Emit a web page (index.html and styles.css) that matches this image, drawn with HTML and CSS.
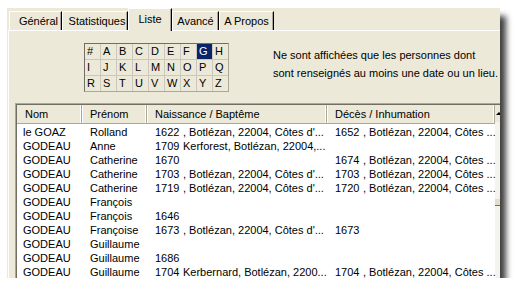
FILE: index.html
```html
<!DOCTYPE html>
<html lang="fr">
  <head>
    <meta charset="UTF-8">
    <title>Liste</title>
    <link rel="stylesheet" href="styles.css">
  </head>
<body>
  <div class="window">
    <div class="tabs">
      <span class="tab t1">Général</span>
      <span class="tab t2">Statistiques</span>
      <span class="tab t3 active">Liste</span>
      <span class="tab t4">Avancé</span>
      <span class="tab t5">A Propos</span>
    </div>

    <div class="page">
      <div class="filter">
        <div class="letters">
          <span>#</span><span>A</span><span>B</span><span>C</span><span>D</span><span>E</span><span>F</span><span class="on">G</span><span>H</span>
          <span>I</span><span>J</span><span>K</span><span>L</span><span>M</span><span>N</span><span>O</span><span>P</span><span>Q</span>
          <span>R</span><span>S</span><span>T</span><span>U</span><span>V</span><span>W</span><span>X</span><span>Y</span><span>Z</span>
        </div>
        <p class="note">
          Ne sont affichées que les personnes dont<br>
          sont renseignés au moins une date ou un lieu.
        </p>
      </div>

      <div class="list">
        <div class="list-inner">
          <div class="table">
            <div class="head">
              <span>Nom</span>
              <span>Prénom</span>
              <span>Naissance / Baptême</span>
              <span>Décès / Inhumation</span>
            </div>
            <div class="rows">
              <div class="row"><span>le GOAZ</span><span>Rolland</span><span><b>1622</b>, Botlézan, 22004, Côtes d'...</span><span><b>1652</b>, Botlézan, 22004, Côtes ...</span></div>
              <div class="row"><span>GODEAU</span><span>Anne</span><span><b>1709</b>Kerforest, Botlézan, 22004,...</span><span></span></div>
              <div class="row"><span>GODEAU</span><span>Catherine</span><span><b>1670</b></span><span><b>1674</b>, Botlézan, 22004, Côtes ...</span></div>
              <div class="row"><span>GODEAU</span><span>Catherine</span><span><b>1703</b>, Botlézan, 22004, Côtes d'...</span><span><b>1703</b>, Botlézan, 22004, Côtes ...</span></div>
              <div class="row"><span>GODEAU</span><span>Catherine</span><span><b>1719</b>, Botlézan, 22004, Côtes d'...</span><span><b>1720</b>, Botlézan, 22004, Côtes ...</span></div>
              <div class="row"><span>GODEAU</span><span>François</span><span></span><span></span></div>
              <div class="row"><span>GODEAU</span><span>François</span><span><b>1646</b></span><span></span></div>
              <div class="row"><span>GODEAU</span><span>Françoise</span><span><b>1673</b>, Botlézan, 22004, Côtes d'...</span><span><b>1673</b></span></div>
              <div class="row"><span>GODEAU</span><span>Guillaume</span><span></span><span></span></div>
              <div class="row"><span>GODEAU</span><span>Guillaume</span><span><b>1686</b></span><span></span></div>
              <div class="row"><span>GODEAU</span><span>Guillaume</span><span><b>1704</b>Kerbernard, Botlézan, 2200...</span><span><b>1704</b>, Botlézan, 22004, Côtes ...</span></div>
            </div>
          </div>
          <div class="scroll">
            <div class="up"></div>
            <div class="thumb"></div>
          </div>
        </div>
      </div>
    </div>
  </div>
</body>
</html>
```

FILE: styles.css
```css
body {
  margin: 0;
  background-color: #fff;
  color: #000;
  font: 11px "Liberation Sans", Arial, sans-serif;
}
.window {
  margin: 8px 0 0 7px;
  width: 493px;
  height: 270px;
  background-color: #ece9d8;
  box-shadow: 7px 7px 6px -1px rgba(0, 0, 0, 0.75);
  overflow: hidden;
  display: flex;
  flex-direction: column;
}

/* tab strip */
.tabs {
  flex: none;
  display: flex;
  align-items: flex-end;
  height: 22px;
  padding-left: 2px;
}
.tab {
  box-sizing: border-box;
  height: 19px;
  line-height: 18px;
  text-align: center;
  border-top: 1px solid #fff;
  border-left: 1px solid #fff;
  border-right: 1px solid #000;
  box-shadow: inset -1px 0 0 #aca899;
}
.t1 { width: 53px; padding-left: 6px; }
.t2 { width: 66px; padding-left: 4px; }
.t3 { width: 44px; }
.t4 { width: 47px; }
.t5 { width: 55px; }
.tab.active {
  position: relative;
  z-index: 1;
  height: 23px;
  margin-bottom: -1px;
  line-height: 21px;
  background-color: #ece9d8;
}

.page {
  flex: 1;
  min-height: 0;
  margin-left: 1px;
  border-top: 1px solid #fff;
  border-left: 1px solid #fff;
}

/* alphabet filter */
.filter {
  display: flex;
  align-items: flex-start;
  margin: 12px 0 0 75px;
}
.letters {
  display: grid;
  grid-template-columns: repeat(9, 15px);
  grid-auto-rows: 15px;
  gap: 1px;
  background-color: #cac8bc;
  border: 1px solid;
  border-color: #716f64 #aca899 #aca899 #716f64;
}
.letters span {
  background-color: #ece9d8;
  padding-left: 2px;
  line-height: 15px;
}
.letters .on {
  background-color: #0a246a;
  color: #fff;
}
.note {
  margin: 3px 0 0 44px;
  line-height: 18px;
}

/* list view */
.list {
  margin: 11px 0 0 6px;
  width: 520px;
  border-top: 1px solid #aca899;
  border-left: 1px solid #aca899;
}
.list-inner {
  display: flex;
  border-top: 1px solid #716f64;
  border-left: 1px solid #716f64;
  height: 200px;
}
.table {
  width: 478px;
  background-color: #fff;
}
.head,
.row {
  display: grid;
  grid-template-columns: 65px 65px 180px 168px;
  white-space: nowrap;
}
.head {
  height: 18px;
  line-height: 18px;
  background-color: #ece9d8;
  border-bottom: 1px solid #aca899;
}
.head span {
  padding-left: 8px;
  border-right: 1px solid #aca899;
  box-shadow: inset -1px 0 0 #fff, inset 1px 0 0 #fff;
}
.head span:first-child {
  box-shadow: inset -1px 0 0 #fff;
}
.rows {
  padding-top: 1px;
}
.row {
  height: 14px;
  line-height: 14px;
}
.row span {
  overflow: hidden;
  padding-left: 8px;
}
.row span:first-child {
  padding-left: 6px;
}
.row b {
  display: inline-block;
  width: 28px;
  font-weight: normal;
}

.scroll {
  width: 17px;
  background-color: #f4f3ee;
}
.up {
  height: 17px;
  background-color: #ece9d8;
  display: flex;
  align-items: center;
  padding-left: 1px;
}
.up::before {
  content: "";
  border: 3px solid transparent;
  border-bottom: 3px solid #000;
  border-top: 0;
}
.thumb {
  height: 83px;
  background-color: #f4f3ee;
  border-bottom: 1px solid #716f64;
  box-shadow: inset 0 -6px 0 #e2dfcd;
}
```
